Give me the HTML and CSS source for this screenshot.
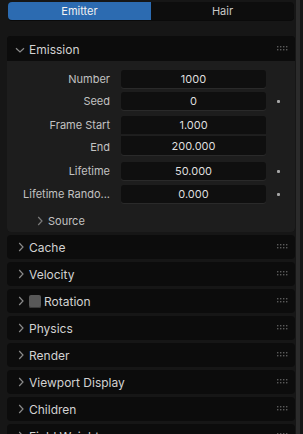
FILE: index.html
```html
<!DOCTYPE html>
<html>
<head>
<meta charset="utf-8">
<link rel="stylesheet" href="styles.css">
</head>
<body>
<div class="app">
  <div class="content">
    <div class="tabs">
      <div class="tab active">Emitter</div>
      <div class="tab">Hair</div>
    </div>

    <div class="panel open">
      <div class="phead">
        <svg class="chev down" width="10" height="10" viewBox="0 0 10 10"><path d="M1 3.2 L5 7 L9 3.2" fill="none" stroke="#8a8a8a" stroke-width="1.2"/></svg>
        <span class="ptitle">Emission</span>
        <svg class="grip" width="12" height="5" viewBox="0 0 12 5"><g fill="#5a5a5a"><rect x="0" y="0" width="1.4" height="1.4"/><rect x="3" y="0" width="1.4" height="1.4"/><rect x="6" y="0" width="1.4" height="1.4"/><rect x="9" y="0" width="1.4" height="1.4"/><rect x="0" y="3" width="1.4" height="1.4"/><rect x="3" y="3" width="1.4" height="1.4"/><rect x="6" y="3" width="1.4" height="1.4"/><rect x="9" y="3" width="1.4" height="1.4"/></g></svg>
      </div>
      <div class="pbody">
        <div class="grid">
          <div class="lbl">Number</div><div class="field">1000</div><div class="dotcell"></div>
          <div class="lbl">Seed</div><div class="field">0</div><div class="dotcell"><span class="kdot"></span></div>
        </div>
        <div class="grid">
          <div class="lbl">Frame Start</div><div class="field top">1.000</div><div class="dotcell"></div>
          <div class="lbl">End</div><div class="field bottom">200.000</div><div class="dotcell"></div>
        </div>
        <div class="grid g2">
          <div class="lbl">Lifetime</div><div class="field">50.000</div><div class="dotcell"><span class="kdot"></span></div>
          <div class="lbl">Lifetime Rando...</div><div class="field">0.000</div><div class="dotcell"><span class="kdot"></span></div>
        </div>
        <div class="sub">
          <svg class="chev right" width="10" height="10" viewBox="0 0 10 10"><path d="M3.2 1 L7 5 L3.2 9" fill="none" stroke="#7a7a7a" stroke-width="1.2"/></svg>
          <span>Source</span>
        </div>
      </div>
    </div>

    <div class="panel"><div class="phead"><svg class="chev right" width="10" height="10" viewBox="0 0 10 10"><path d="M3.2 1 L7 5 L3.2 9" fill="none" stroke="#8a8a8a" stroke-width="1.2"/></svg><span class="ptitle">Cache</span><svg class="grip" width="12" height="5" viewBox="0 0 12 5"><g fill="#5a5a5a"><rect x="0" y="0" width="1.4" height="1.4"/><rect x="3" y="0" width="1.4" height="1.4"/><rect x="6" y="0" width="1.4" height="1.4"/><rect x="9" y="0" width="1.4" height="1.4"/><rect x="0" y="3" width="1.4" height="1.4"/><rect x="3" y="3" width="1.4" height="1.4"/><rect x="6" y="3" width="1.4" height="1.4"/><rect x="9" y="3" width="1.4" height="1.4"/></g></svg></div></div>

    <div class="panel"><div class="phead"><svg class="chev right" width="10" height="10" viewBox="0 0 10 10"><path d="M3.2 1 L7 5 L3.2 9" fill="none" stroke="#8a8a8a" stroke-width="1.2"/></svg><span class="ptitle">Velocity</span><svg class="grip" width="12" height="5" viewBox="0 0 12 5"><g fill="#5a5a5a"><rect x="0" y="0" width="1.4" height="1.4"/><rect x="3" y="0" width="1.4" height="1.4"/><rect x="6" y="0" width="1.4" height="1.4"/><rect x="9" y="0" width="1.4" height="1.4"/><rect x="0" y="3" width="1.4" height="1.4"/><rect x="3" y="3" width="1.4" height="1.4"/><rect x="6" y="3" width="1.4" height="1.4"/><rect x="9" y="3" width="1.4" height="1.4"/></g></svg></div></div>

    <div class="panel"><div class="phead"><svg class="chev right" width="10" height="10" viewBox="0 0 10 10"><path d="M3.2 1 L7 5 L3.2 9" fill="none" stroke="#8a8a8a" stroke-width="1.2"/></svg><span class="check"></span><span class="ptitle">Rotation</span><svg class="grip" width="12" height="5" viewBox="0 0 12 5"><g fill="#5a5a5a"><rect x="0" y="0" width="1.4" height="1.4"/><rect x="3" y="0" width="1.4" height="1.4"/><rect x="6" y="0" width="1.4" height="1.4"/><rect x="9" y="0" width="1.4" height="1.4"/><rect x="0" y="3" width="1.4" height="1.4"/><rect x="3" y="3" width="1.4" height="1.4"/><rect x="6" y="3" width="1.4" height="1.4"/><rect x="9" y="3" width="1.4" height="1.4"/></g></svg></div></div>

    <div class="panel"><div class="phead"><svg class="chev right" width="10" height="10" viewBox="0 0 10 10"><path d="M3.2 1 L7 5 L3.2 9" fill="none" stroke="#8a8a8a" stroke-width="1.2"/></svg><span class="ptitle">Physics</span><svg class="grip" width="12" height="5" viewBox="0 0 12 5"><g fill="#5a5a5a"><rect x="0" y="0" width="1.4" height="1.4"/><rect x="3" y="0" width="1.4" height="1.4"/><rect x="6" y="0" width="1.4" height="1.4"/><rect x="9" y="0" width="1.4" height="1.4"/><rect x="0" y="3" width="1.4" height="1.4"/><rect x="3" y="3" width="1.4" height="1.4"/><rect x="6" y="3" width="1.4" height="1.4"/><rect x="9" y="3" width="1.4" height="1.4"/></g></svg></div></div>

    <div class="panel"><div class="phead"><svg class="chev right" width="10" height="10" viewBox="0 0 10 10"><path d="M3.2 1 L7 5 L3.2 9" fill="none" stroke="#8a8a8a" stroke-width="1.2"/></svg><span class="ptitle">Render</span><svg class="grip" width="12" height="5" viewBox="0 0 12 5"><g fill="#5a5a5a"><rect x="0" y="0" width="1.4" height="1.4"/><rect x="3" y="0" width="1.4" height="1.4"/><rect x="6" y="0" width="1.4" height="1.4"/><rect x="9" y="0" width="1.4" height="1.4"/><rect x="0" y="3" width="1.4" height="1.4"/><rect x="3" y="3" width="1.4" height="1.4"/><rect x="6" y="3" width="1.4" height="1.4"/><rect x="9" y="3" width="1.4" height="1.4"/></g></svg></div></div>

    <div class="panel"><div class="phead"><svg class="chev right" width="10" height="10" viewBox="0 0 10 10"><path d="M3.2 1 L7 5 L3.2 9" fill="none" stroke="#8a8a8a" stroke-width="1.2"/></svg><span class="ptitle">Viewport Display</span><svg class="grip" width="12" height="5" viewBox="0 0 12 5"><g fill="#5a5a5a"><rect x="0" y="0" width="1.4" height="1.4"/><rect x="3" y="0" width="1.4" height="1.4"/><rect x="6" y="0" width="1.4" height="1.4"/><rect x="9" y="0" width="1.4" height="1.4"/><rect x="0" y="3" width="1.4" height="1.4"/><rect x="3" y="3" width="1.4" height="1.4"/><rect x="6" y="3" width="1.4" height="1.4"/><rect x="9" y="3" width="1.4" height="1.4"/></g></svg></div></div>

    <div class="panel"><div class="phead"><svg class="chev right" width="10" height="10" viewBox="0 0 10 10"><path d="M3.2 1 L7 5 L3.2 9" fill="none" stroke="#8a8a8a" stroke-width="1.2"/></svg><span class="ptitle">Children</span><svg class="grip" width="12" height="5" viewBox="0 0 12 5"><g fill="#5a5a5a"><rect x="0" y="0" width="1.4" height="1.4"/><rect x="3" y="0" width="1.4" height="1.4"/><rect x="6" y="0" width="1.4" height="1.4"/><rect x="9" y="0" width="1.4" height="1.4"/><rect x="0" y="3" width="1.4" height="1.4"/><rect x="3" y="3" width="1.4" height="1.4"/><rect x="6" y="3" width="1.4" height="1.4"/><rect x="9" y="3" width="1.4" height="1.4"/></g></svg></div></div>

    <div class="panel"><div class="phead"><svg class="chev right" width="10" height="10" viewBox="0 0 10 10"><path d="M3.2 1 L7 5 L3.2 9" fill="none" stroke="#8a8a8a" stroke-width="1.2"/></svg><span class="ptitle">Field Weights</span><svg class="grip" width="12" height="5" viewBox="0 0 12 5"><g fill="#5a5a5a"><rect x="0" y="0" width="1.4" height="1.4"/><rect x="3" y="0" width="1.4" height="1.4"/><rect x="6" y="0" width="1.4" height="1.4"/><rect x="9" y="0" width="1.4" height="1.4"/><rect x="0" y="3" width="1.4" height="1.4"/><rect x="3" y="3" width="1.4" height="1.4"/><rect x="6" y="3" width="1.4" height="1.4"/><rect x="9" y="3" width="1.4" height="1.4"/></g></svg></div></div>
  </div>
  <div class="scrollbar"></div>
</div>
</body>
</html>
```

FILE: styles.css
```css
html, body {
  margin: 0;
  padding: 0;
  background: #161616;
  width: 303px;
  height: 434px;
  overflow: hidden;
  font-family: Inter, "Noto Sans", "DejaVu Sans", sans-serif;
  -webkit-font-smoothing: antialiased;
}

.app {
  display: flex;
  height: 434px;
  overflow: hidden;
}

.content {
  width: 288px;
  padding: 2px 1px 0 7px;
  display: flex;
  flex-direction: column;
  gap: 3px;
}

.content > * {
  flex-shrink: 0;
}

.scrollbar {
  width: 4px;
  background: #2b2b2b;
}

.tabs {
  display: flex;
  height: 18px;
  margin: 0 1px 13px 1px;
  background: #0d0d0d;
  border-radius: 4px;
  box-shadow: 0 1px 0 #0a0a0a;
  overflow: hidden;
}

.tab {
  flex: 1;
  display: flex;
  align-items: center;
  justify-content: center;
  font-size: 11px;
  color: #c8c8c8;
}

.tab.active {
  background: #2c6bb1;
  color: #f2f2f2;
}

.panel {
  border-radius: 4px;
  overflow: hidden;
  background: #0c0c0c;
}

.phead {
  height: 24px;
  display: flex;
  align-items: center;
  padding-left: 9px;
  background: #0c0c0c;
}

.panel.open .phead {
  height: 25px;
}

.chev {
  width: 10px;
  height: 10px;
  flex-shrink: 0;
  margin-right: 3px;
}

.chev.down {
  margin-top: 3px;
  margin-left: -1px;
  margin-right: 4px;
}

.ptitle {
  font-size: 12px;
  color: #d2d2d2;
  flex: 1;
  padding-top: 1px;
}

.check {
  width: 12px;
  height: 13px;
  background: #585858;
  border-radius: 2px;
  margin-right: 3px;
  box-shadow: inset 0 -1px 0 #3a3a3a;
}

.grip {
  margin-right: 6px;
  margin-top: -1px;
}

.pbody {
  background: #1d1d1d;
  padding: 9px 0 2px 0;
  display: flex;
  flex-direction: column;
  gap: 6px;
}

.grid {
  display: grid;
  grid-template-columns: 103px 145px 1fr;
  column-gap: 11px;
  row-gap: 4px;
}

.grid.g2 {
  row-gap: 5px;
}

.lbl {
  height: 18px;
  line-height: 18px;
  text-align: right;
  font-size: 11px;
  color: #c2c2c2;
  white-space: nowrap;
}

.field {
  height: 18px;
  line-height: 18px;
  background: #0f0f0f;
  border-radius: 3px;
  text-align: center;
  font-size: 11px;
  color: #dedede;
  box-shadow: 0 1px 0 #2a2a2a;
}

.grid .field.top {
  border-radius: 3px 3px 0 0;
  box-shadow: none;
}

.grid .field.bottom {
  border-radius: 0 0 3px 3px;
  margin-top: -3px;
  height: 19px;
  line-height: 20px;
  border-top: 1px solid #1f1f1f;
}

.dotcell {
  display: flex;
  align-items: center;
}

.kdot {
  width: 3px;
  height: 3px;
  border-radius: 1px;
  background: #a5a5a5;
}

.sub {
  height: 18px;
  display: flex;
  align-items: center;
  padding-left: 28px;
  margin-top: 3px;
  font-size: 11px;
  color: #c2c2c2;
}

.sub .chev {
  margin-right: 3px;
}
```
